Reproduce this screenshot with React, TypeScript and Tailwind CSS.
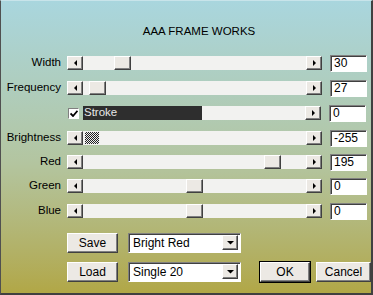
import type { ReactNode } from "react";

const raised =
  "border border-t-white border-l-white border-r-[#404040] border-b-[#404040] shadow-[inset_-1px_-1px_0_#808080] bg-[#ece9e4]";
const sunken =
  "border border-t-[#808080] border-l-[#808080] border-r-white border-b-white shadow-[inset_1px_1px_0_#404040] bg-white";

function Arrow({ dir }: { dir: "left" | "right" | "down" }) {
  const d =
    dir === "left" ? "M4 0 L4 6 L1 3 Z" : dir === "right" ? "M1 0 L1 6 L4 3 Z" : "M0 1 L7 1 L3.5 4.5 Z";
  return (
    <svg width={dir === "down" ? 7 : 5} height={dir === "down" ? 5 : 6} viewBox={dir === "down" ? "0 0 7 5" : "0 0 5 6"}>
      <path d={d} fill="#000" />
    </svg>
  );
}

function ArrowBtn({ dir }: { dir: "left" | "right" }) {
  return (
    <div className={`${raised} flex h-[14px] w-[16px] shrink-0 items-center justify-center`}>
      <Arrow dir={dir} />
    </div>
  );
}

function Track({ thumb, children }: { thumb?: number; children?: ReactNode }) {
  return (
    <div className="flex h-[14px] w-[255px] shrink-0">
      <ArrowBtn dir="left" />
      <div className="relative flex-1 bg-[#f2f2f0]">
        {children}
        {thumb !== undefined && (
          <div className={`${raised} absolute top-0 h-[14px] w-[17px]`} style={{ left: thumb }} />
        )}
      </div>
      <ArrowBtn dir="right" />
    </div>
  );
}

function ValueBox({ value }: { value: string }) {
  return (
    <div className={`${sunken} ml-[8px] flex h-[17px] w-[37px] items-center pl-[3px] text-[12px] leading-none`}>
      {value}
    </div>
  );
}

function Row({ label, value, mt, children }: { label: string; value: string; mt: string; children: ReactNode }) {
  return (
    <div className={`flex items-center ${mt}`}>
      <div className="w-[66px] pr-[6px] text-right text-[11.5px] leading-none">{label}</div>
      {children}
      <ValueBox value={value} />
    </div>
  );
}

function Button({ label, w, strong }: { label: string; w: string; strong?: boolean }) {
  return (
    <div
      className={`${raised} ${w} flex h-[20px] items-center justify-center text-[12px] leading-none ${
        strong ? "outline outline-1 outline-black" : ""
      }`}
    >
      {label}
    </div>
  );
}

function Select({ value }: { value: string }) {
  return (
    <div className={`${sunken} ml-[10px] flex h-[20px] w-[113px] items-center pl-[4px] pr-[2px] text-[12px] leading-none`}>
      <span className="flex-1">{value}</span>
      <div className={`${raised} flex h-[15px] w-[16px] items-center justify-center`}>
        <Arrow dir="down" />
      </div>
    </div>
  );
}

export default function App() {
  return (
    <div
      className="h-[295px] w-[373px] overflow-hidden border-l border-r-2 border-b-2 border-t border-l-[#505050] border-r-[#404040] border-b-[#404040] border-t-[#c8e4ea] bg-linear-to-b from-[#a9d6de] via-[#b3c5a0] via-55% to-[#b1a746] text-black"
      style={{ fontFamily: '"Liberation Sans", Arial, sans-serif' }}
    >
      <div className="pt-[25px] text-center text-[11.5px] leading-none">
        <span className="pl-[26px]">AAA FRAME WORKS</span>
      </div>

      <Row label="Width" value="30" mt="mt-[17px]">
        <Track thumb={31} />
      </Row>
      <Row label="Frequency" value="27" mt="mt-[8px]">
        <Track thumb={6} />
      </Row>

      <div className="mt-[8px] flex items-center">
        <div className="flex w-[82px] justify-end">
          <div className="mr-[4px] flex h-[11px] w-[11px] items-center justify-center border border-t-[#808080] border-l-[#808080] border-r-white border-b-white bg-white">
            <svg width="8" height="7" viewBox="0 0 8 7">
              <path d="M0.5 3.5 L3 6 L7.5 0.8" fill="none" stroke="#000" strokeWidth="1.8" />
            </svg>
          </div>
        </div>
        <div className="flex h-[14px] w-[222px] bg-[#f2f2f0]">
          <div className="flex w-[119px] items-center bg-[#2e2e2e] pl-[1px] text-[11.5px] leading-none text-[#e8e8e8]">
            Stroke
          </div>
        </div>
        <ArrowBtn dir="right" />
        <ValueBox value="0" />
      </div>

      <Row label="Brightness" value="-255" mt="mt-[8px]">
        <Track>
          <div className="absolute left-[2px] top-[1px] h-[12px] w-[14px] bg-[repeating-conic-gradient(#222_0_25%,#f0f0f0_0_50%)] bg-[length:2px_2px]" />
        </Track>
      </Row>
      <Row label="Red" value="195" mt="mt-[7px]">
        <Track thumb={181} />
      </Row>
      <Row label="Green" value="0" mt="mt-[7px]">
        <Track thumb={103} />
      </Row>
      <Row label="Blue" value="0" mt="mt-[8px]">
        <Track thumb={103} />
      </Row>

      <div className="mt-[13px] flex items-center pl-[66px]">
        <Button label="Save" w="w-[51px]" />
        <Select value="Bright Red" />
      </div>
      <div className="mt-[9px] flex items-center pl-[66px]">
        <Button label="Load" w="w-[51px]" />
        <Select value="Single 20" />
        <div className="ml-[19px]">
          <Button label="OK" w="w-[50px]" strong />
        </div>
        <div className="ml-[6px]">
          <Button label="Cancel" w="w-[55px]" />
        </div>
      </div>
    </div>
  );
}
